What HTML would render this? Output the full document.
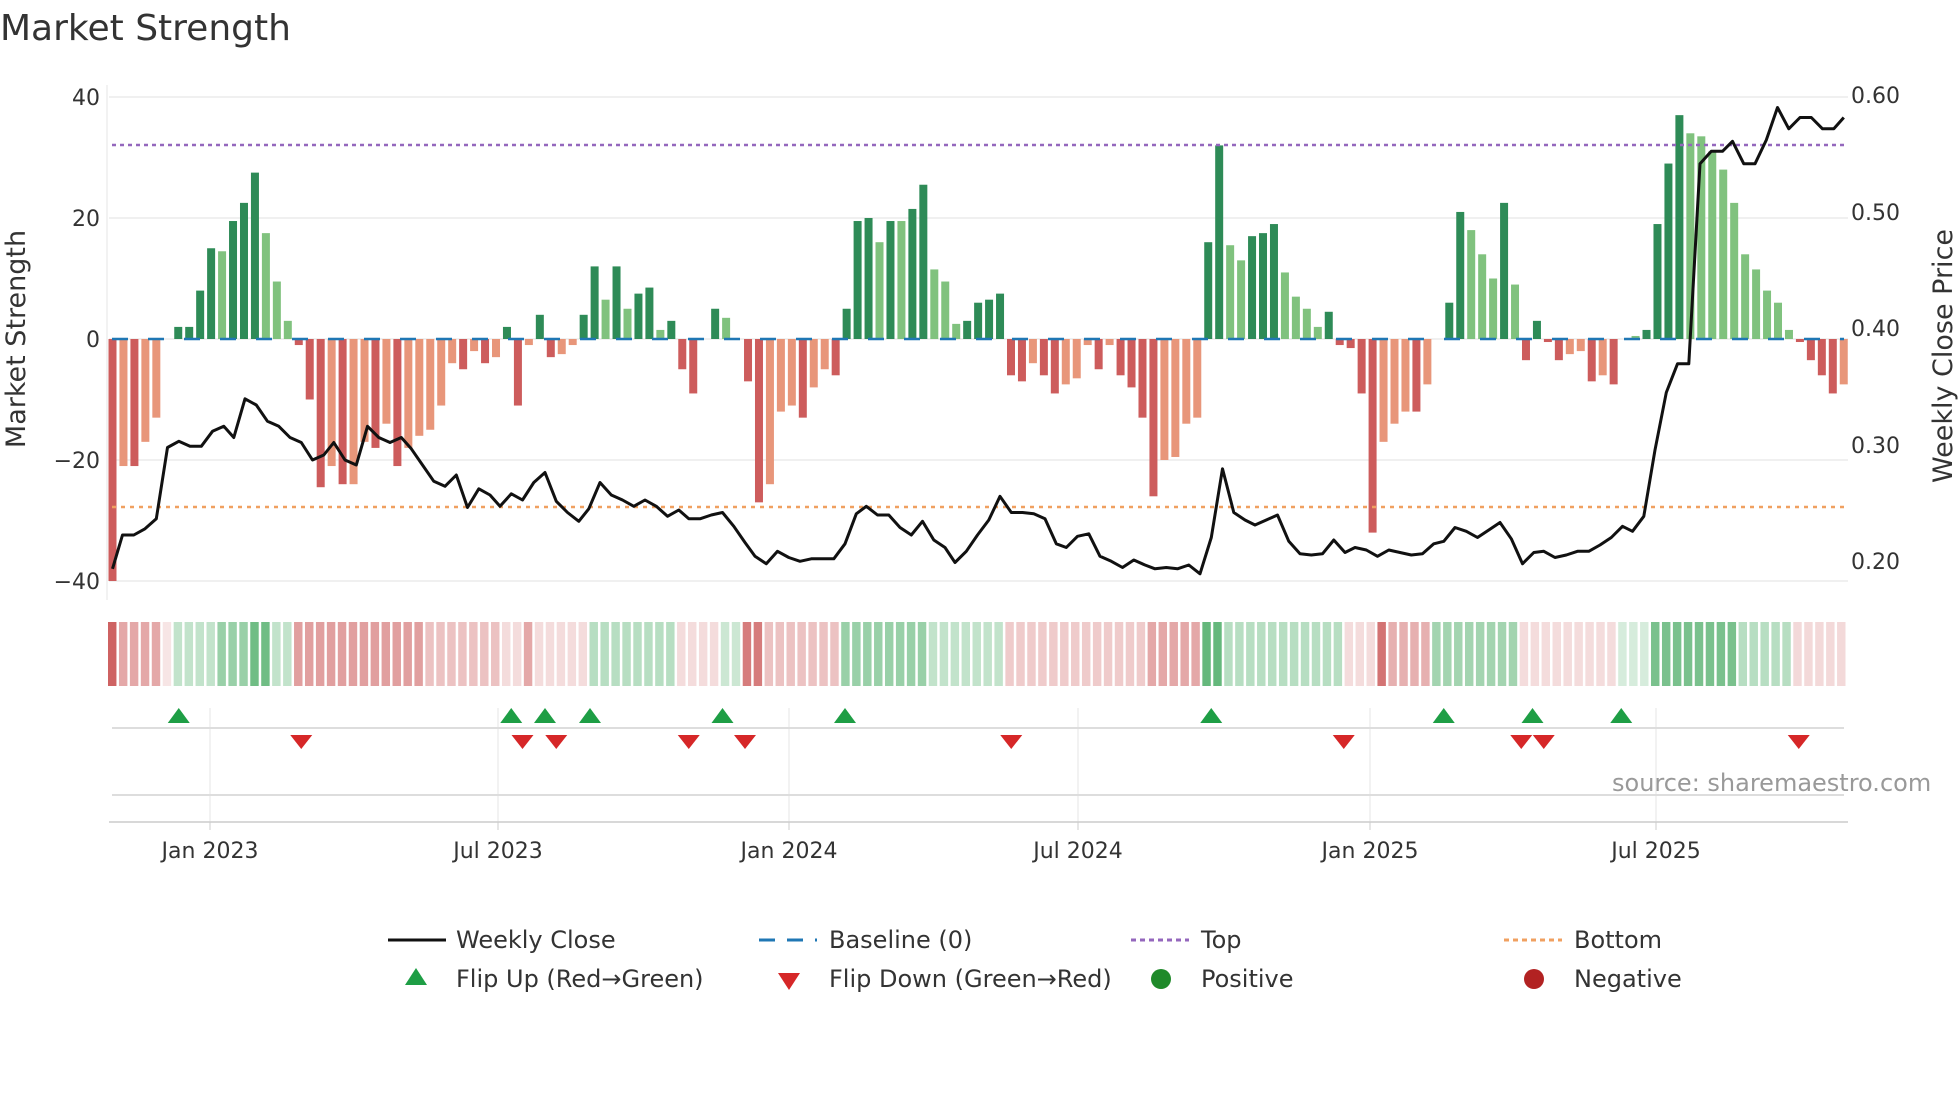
<!DOCTYPE html>
<html><head><meta charset="utf-8"><style>
html,body{margin:0;padding:0;background:#fff;width:1960px;height:1102px;overflow:hidden}
svg{display:block}
text{font-family:"DejaVu Sans","Liberation Sans",sans-serif;fill:#333}
</style></head><body>
<svg id="s" width="1960" height="1102" viewBox="0 0 1960 1102" xmlns="http://www.w3.org/2000/svg">
<text x="0" y="40" font-size="36">Market Strength</text>
<g id="g"></g>
<text x="1612" y="791" font-size="24" fill="#999" style="fill:#999">source: sharemaestro.com</text>
<text transform="translate(25,339) rotate(-90)" text-anchor="middle" font-size="27">Market Strength</text>
<text transform="translate(1952,356) rotate(-90)" text-anchor="middle" font-size="27">Weekly Close Price</text>
<line x1="388" y1="940" x2="446" y2="940" stroke="#111" stroke-width="3"/>
<text x="456" y="948" font-size="24">Weekly Close</text>
<line x1="759" y1="940" x2="817" y2="940" stroke="#1f77b4" stroke-width="3" stroke-dasharray="16,12"/>
<text x="829" y="948" font-size="24">Baseline (0)</text>
<line x1="1131" y1="940" x2="1189" y2="940" stroke="#9467bd" stroke-width="3" stroke-dasharray="5,4"/>
<text x="1201" y="948" font-size="24">Top</text>
<line x1="1504" y1="940" x2="1562" y2="940" stroke="#f0a060" stroke-width="3" stroke-dasharray="5,4"/>
<text x="1574" y="948" font-size="24">Bottom</text>
<polygon points="416,968 405,985 427,985" fill="#1e9e45"/>
<text x="456" y="987" font-size="24">Flip Up (Red→Green)</text>
<polygon points="778,973 800,973 789,990" fill="#d62728"/>
<text x="829" y="987" font-size="24">Flip Down (Green→Red)</text>
<circle cx="1161" cy="979" r="10" fill="#1f8a2a"/>
<text x="1201" y="987" font-size="24">Positive</text>
<circle cx="1534" cy="979" r="10" fill="#b22222"/>
<text x="1574" y="987" font-size="24">Negative</text>
</svg>
<script>
const S=1.25,g=document.getElementById('g');let h='';
const Y0=339,PU=6.05;
[40,20,0,-20,-40].forEach(v=>{const y=Y0-v*PU;h+=`<line x1="109" x2="1848" y1="${y}" y2="${y}" stroke="#ececec" stroke-width="1.5"/>`;
h+=`<text x="100" y="${y+8}" text-anchor="end" font-size="22">${v<0?'−'+(-v):v}</text>`;});
[['0.60',95],['0.50',212],['0.40',328],['0.30',445],['0.20',561]].forEach(a=>h+=`<text x="1851" y="${a[1]+8}" font-size="22">${a[0]}</text>`);
h+=`<line x1="107" x2="107" y1="85" y2="600" stroke="#eee" stroke-width="1.5"/>`;
[[210,'Jan 2023'],[498,'Jul 2023'],[789,'Jan 2024'],[1078,'Jul 2024'],[1370,'Jan 2025'],[1656,'Jul 2025']].forEach(a=>{
h+=`<line x1="${a[0]}" x2="${a[0]}" y1="708" y2="822" stroke="#eee" stroke-width="1.5"/><line x1="${a[0]}" x2="${a[0]}" y1="822" y2="830" stroke="#ccc"/><text x="${a[0]}" y="858" text-anchor="middle" font-size="22">${a[1]}</text>`;});
h+=`<line x1="112" x2="1844" y1="728" y2="728" stroke="#ddd" stroke-width="2"/><line x1="112" x2="1844" y1="795" y2="795" stroke="#ddd" stroke-width="2"/><line x1="109" x2="1848" y1="822" y2="822" stroke="#ccc" stroke-width="1.5"/>`;
const B=[[-40,1],[-21,0],[-21,1],[-17,0],[-13,0],[0,0],[2,1],[2,1],[8,1],[15,1],[14.5,0],[19.5,1],[22.5,1],[27.5,1],[17.5,0],[9.5,0],[3,0],[-1,1],[-10,1],[-24.5,1],[-21,0],[-24,1],[-24,0],[-17,0],[-18,1],[-14,0],[-21,1],[-18,0],[-16,0],[-15,0],[-11,0],[-4,0],[-5,1],[-2,0],[-4,1],[-3,0],[2,1],[-11,1],[-1,0],[4,1],[-3,1],[-2.5,0],[-1,0],[4,1],[12,1],[6.5,0],[12,1],[5,0],[7.5,1],[8.5,1],[1.5,0],[3,1],[-5,1],[-9,1],[0,0],[5,1],[3.5,0],[0,0],[-7,1],[-27,1],[-24,0],[-12,0],[-11,0],[-13,1],[-8,0],[-5,0],[-6,1],[5,1],[19.5,1],[20,1],[16,0],[19.5,1],[19.5,0],[21.5,1],[25.5,1],[11.5,0],[9.5,0],[2.5,0],[3,1],[6,1],[6.5,1],[7.5,1],[-6,1],[-7,1],[-4,0],[-6,1],[-9,1],[-7.5,0],[-6.5,0],[-1,0],[-5,1],[-1,0],[-6,1],[-8,1],[-13,1],[-26,1],[-20,0],[-19.5,0],[-14,0],[-13,0],[16,1],[32,1],[15.5,0],[13,0],[17,1],[17.5,1],[19,1],[11,0],[7,0],[5,0],[2,0],[4.5,1],[-1,1],[-1.5,1],[-9,1],[-32,1],[-17,0],[-14,0],[-12,0],[-12,1],[-7.5,0],[0,0],[6,1],[21,1],[18,0],[14,0],[10,0],[22.5,1],[9,0],[-3.5,1],[3,1],[-0.5,1],[-3.5,1],[-2.5,0],[-2,0],[-7,1],[-6,0],[-7.5,1],[0,0],[0.5,0],[1.5,1],[19,1],[29,1],[37,1],[34,0],[33.5,0],[31,0],[28,0],[22.5,0],[14,0],[11.5,0],[8,0],[6,0],[1.5,0],[-0.5,1],[-3.5,1],[-6,1],[-9,1],[-7.5,0]];
const N=B.length,x0=90*S,x1=1475*S,dx=(x1-x0)/(N-1);
const SEG=[[87,95,'r',.9],[95,131,'r',.5],[131,140,'r',.15],[140,175,'g',.3],[175,200,'g',.5],[200,215,'g',.7],[215,236,'g',.3],[236,340,'r',.55],[340,405,'r',.35],[405,415,'r',.2],[415,430,'r',.5],[430,468,'r',.2],[468,545,'g',.35],[545,575,'r',.2],[575,593,'g',.25],[593,615,'r',.75],[615,672,'r',.35],[672,745,'g',.5],[745,805,'g',.3],[805,920,'r',.3],[920,965,'r',.5],[965,980,'g',.75],[980,1072,'g',.35],[1072,1100,'r',.2],[1100,1108,'r',.8],[1108,1150,'r',.45],[1150,1213,'g',.45],[1213,1295,'r',.2],[1295,1320,'g',.2],[1320,1390,'g',.65],[1390,1435,'g',.35],[1435,1480,'r',.22]];
function mix(c,a){const w=[255,255,255];return `rgb(${c.map((v,i)=>Math.round(w[i]+(v-w[i])*a)).join(',')})`;}
const sx0=108,sw=(1848-108)/N;
for(let i=0;i<N;i++){const cx=(sx0+sw*(i+.5))/S;let s=SEG.find(q=>cx>=q[0]&&cx<q[1])||SEG[SEG.length-1];
const c=s[2]=='r'?[200,80,80]:[50,160,80];h+=`<rect x="${sx0+sw*i}" y="622" width="${sw-2.5}" height="64" fill="${mix(c,s[3])}"/>`;}
B.forEach((b,i)=>{const v=b[0];if(!v)return;const x=x0+dx*i-4;const y=v>0?Y0-v*PU:Y0;const hh=Math.abs(v)*PU;
const col=v>0?(b[1]?'#2e8b57':'#80c27e'):(b[1]?'#cd5c5c':'#e8967a');h+=`<rect x="${x}" y="${y}" width="8" height="${hh}" fill="${col}"/>`;});
h+=`<line x1="112" x2="1844" y1="${Y0}" y2="${Y0}" stroke="#1f77b4" stroke-width="2.5" stroke-dasharray="16,20"/>`;
h+=`<line x1="112" x2="1844" y1="145" y2="145" stroke="#9467bd" stroke-width="2.5" stroke-dasharray="4,4"/>`;
h+=`<line x1="112" x2="1844" y1="507" y2="507" stroke="#f0a060" stroke-width="2.5" stroke-dasharray="4,5"/>`;
const L=[[90,455],[98,428],[107,428],[116,423],[125,415],[134,358],[143,353],[152,357],[161,357],[170,345],[179,341],[187,350],[196,319],[205,324],[214,337],[223,341],[232,350],[241,354],[250,368],[259,364],[267,354],[276,368],[285,372],[294,341],[303,350],[312,354],[321,350],[329,359],[338,372],[347,385],[356,389],[365,380],[374,406],[383,391],[392,396],[400,405],[409,395],[418,400],[427,386],[436,378],[445,401],[454,410],[463,417],[471,407],[480,386],[489,396],[498,400],[507,405],[516,400],[525,405],[534,413],[543,408],[551,415],[560,415],[569,412],[578,410],[587,421],[596,434],[604,445],[613,451],[622,441],[631,446],[640,449],[649,447],[658,447],[667,447],[676,435],[685,411],[693,405],[702,412],[711,412],[720,422],[729,428],[738,417],[747,432],[756,438],[764,450],[773,441],[782,428],[791,416],[800,397],[809,410],[818,410],[827,411],[836,415],[845,435],[853,438],[862,429],[871,427],[880,445],[889,449],[898,454],[907,448],[916,452],[924,455],[933,454],[942,455],[951,452],[960,459],[969,430],[978,375],[987,410],[996,416],[1004,420],[1013,416],[1022,412],[1031,433],[1040,443],[1049,444],[1058,443],[1067,432],[1076,442],[1084,438],[1093,440],[1102,445],[1111,440],[1120,442],[1129,444],[1138,443],[1147,435],[1155,433],[1164,422],[1173,425],[1182,430],[1191,424],[1200,418],[1209,431],[1218,451],[1227,442],[1235,441],[1244,446],[1253,444],[1262,441],[1271,441],[1280,436],[1289,430],[1298,421],[1306,425],[1315,413],[1324,360],[1333,314],[1342,291],[1351,291],[1360,131],[1369,121],[1378,121],[1386,113],[1395,131],[1404,131],[1413,112],[1422,86],[1431,103],[1440,94],[1449,94],[1458,103],[1467,103],[1475,94]];
h+=`<polyline fill="none" stroke="#111" stroke-width="3" stroke-linejoin="round" points="${L.map(p=>(p[0]*S).toFixed(1)+','+(p[1]*S).toFixed(1)).join(' ')}"/>`;
[143,409,436,472,578,676,969,1155,1226,1297].forEach(x=>{x*=S;h+=`<polygon points="${x},708 ${x-11},723 ${x+11},723" fill="#1e9e45"/>`;});
[241,418,445,551,596,809,1075,1217,1235,1439].forEach(x=>{x*=S;h+=`<polygon points="${x-11},735 ${x+11},735 ${x},749" fill="#d62728"/>`;});
g.innerHTML=h;
</script>
</body></html>
